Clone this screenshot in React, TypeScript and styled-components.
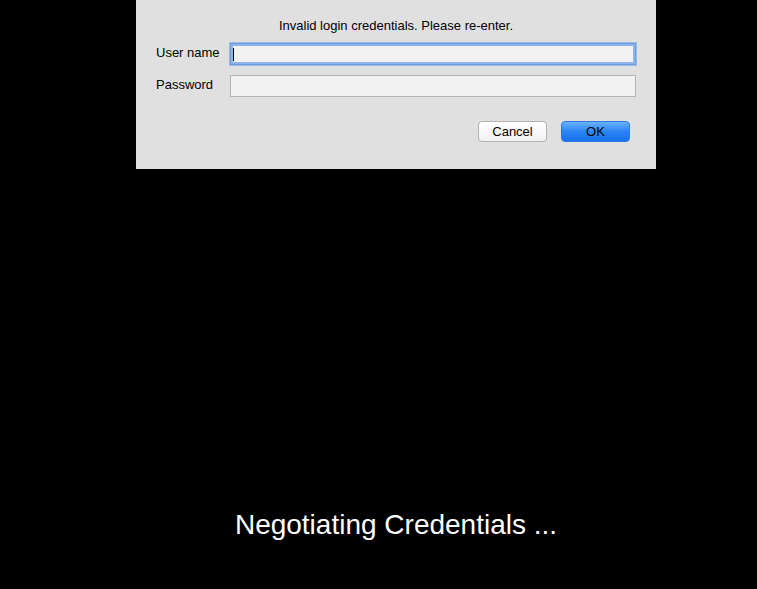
import React from "react";
import styled, { createGlobalStyle } from "styled-components";

const GlobalStyle = createGlobalStyle`
  html, body {
    margin: 0;
    padding: 0;
    background: #000;
    font-family: "Liberation Sans", Arial, Helvetica, sans-serif;
  }
`;

const Screen = styled.div`
  width: 757px;
  height: 589px;
  background: #000;
  overflow: hidden;
`;

const Dialog = styled.div`
  box-sizing: border-box;
  margin-left: 136px;
  width: 520px;
  height: 169px;
  background: #e0e0e0;
  padding: 18px 20px 0 20px;
  display: flex;
  flex-direction: column;
  color: #000;
  font-size: 13px;
`;

const Message = styled.div`
  text-align: center;
  line-height: 16px;
  height: 16px;
  margin-bottom: 9px;
`;

const Row = styled.div`
  display: flex;
  align-items: center;
  height: 22px;
  margin-bottom: 10px;
`;

const Label = styled.div`
  width: 74px;
  flex: none;
  line-height: 20px;
  padding-bottom: 2px;
`;

const Field = styled.div<{ $focused?: boolean }>`
  box-sizing: border-box;
  width: 406px;
  height: 22px;
  background: #f2f2f2;
  border: 1px solid ${(p) => (p.$focused ? "#6f9de0" : "#b4b4b4")};
  box-shadow: ${(p) =>
    p.$focused ? "0 0 0 1px #98bbe9, inset 0 0 0 2px #8eb4ea" : "none"};
  display: flex;
  align-items: center;
  padding-left: 2px;
`;

const Caret = styled.span`
  display: block;
  width: 1px;
  height: 13px;
  background: #000;
`;

const Actions = styled.div`
  display: flex;
  justify-content: flex-end;
  gap: 14px;
  margin-top: 14px;
  padding-right: 6px;
`;

const Button = styled.button<{ $primary?: boolean }>`
  box-sizing: border-box;
  width: 69px;
  height: 21px;
  padding: 0;
  border-radius: 4px;
  font-family: inherit;
  font-size: 13px;
  color: #000;
  border: 1px solid ${(p) => (p.$primary ? "#2b78e4" : "#b2b2b2")};
  background: ${(p) =>
    p.$primary
      ? "linear-gradient(#68b1fb, #2b86f4 50%, #1a70ee)"
      : "linear-gradient(#ffffff, #f1f1f1)"};
  line-height: 17px;
`;

const Status = styled.div`
  margin-top: 340px;
  margin-left: 136px;
  width: 520px;
  text-align: center;
  color: #fff;
  font-size: 28px;
  line-height: 32px;
  white-space: nowrap;
`;

export default function App() {
  return (
    <Screen>
      <GlobalStyle />
      <Dialog>
        <Message>Invalid login credentials. Please re-enter.</Message>
        <Row>
          <Label>User name</Label>
          <Field $focused>
            <Caret />
          </Field>
        </Row>
        <Row>
          <Label>Password</Label>
          <Field />
        </Row>
        <Actions>
          <Button>Cancel</Button>
          <Button $primary>OK</Button>
        </Actions>
      </Dialog>
      <Status>Negotiating Credentials ...</Status>
    </Screen>
  );
}
